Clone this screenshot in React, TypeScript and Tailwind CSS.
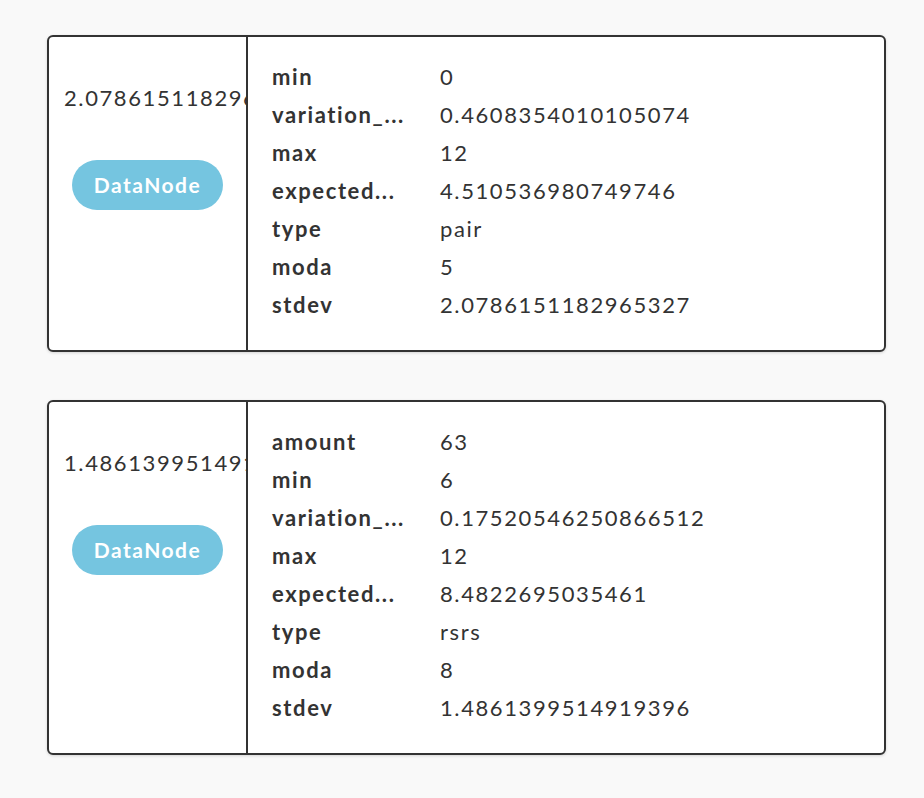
import React from 'react';

type Node = {
  value: string;
  label: string;
  stats: [string, string][];
};

const NODES: Node[] = [
  {
    value: '2.0786151182965327',
    label: 'DataNode',
    stats: [
      ['min', '0'],
      ['variation_...', '0.4608354010105074'],
      ['max', '12'],
      ['expected...', '4.510536980749746'],
      ['type', 'pair'],
      ['moda', '5'],
      ['stdev', '2.0786151182965327'],
    ],
  },
  {
    value: '1.4861399514919396',
    label: 'DataNode',
    stats: [
      ['amount', '63'],
      ['min', '6'],
      ['variation_...', '0.17520546250866512'],
      ['max', '12'],
      ['expected...', '8.4822695035461'],
      ['type', 'rsrs'],
      ['moda', '8'],
      ['stdev', '1.4861399514919396'],
    ],
  },
];

const NodeCard: React.FC<{ node: Node }> = ({ node }) => {
  return (
    <div className="flex w-[839px] rounded-[6px] border-2 border-[#333333] bg-white shadow-[0_1px_3px_rgba(0,0,0,0.15)]">
      {/* left: value + badge */}
      <div className="flex w-[199px] shrink-0 flex-col items-center overflow-hidden border-r-2 border-[#333333] pt-[42px]">
        <div className="w-full overflow-hidden whitespace-nowrap pl-[15px] leading-[38px]">{node.value}</div>
        <div className="mt-[43px] flex h-[50px] w-[151px] items-center justify-center rounded-full bg-[#75c5e0] text-[21px] font-bold tracking-[1.5px] text-white">
          {node.label}
        </div>
      </div>

      {/* right: stats table */}
      <div className="flex flex-col pl-[24px] pt-[21px] pb-[26px]">
        {node.stats.map(([key, val]) => (
          <div key={key} className="flex leading-[38px]">
            <div className="w-[168px] shrink-0 whitespace-nowrap font-bold">{key}</div>
            <div>{val}</div>
          </div>
        ))}
      </div>
    </div>
  );
};

const App: React.FC = () => {
  return (
    <div className="min-h-[798px] bg-[#f9f9f9] pt-[35px] pl-[47px] text-[22px] tracking-[1.6px] text-[#333333] [font-family:Lato,'Open_Sans',sans-serif]">
      <div className="flex flex-col gap-[48px]">
        {NODES.map((node, i) => (
          <NodeCard key={i} node={node} />
        ))}
      </div>
    </div>
  );
};

export default App;
